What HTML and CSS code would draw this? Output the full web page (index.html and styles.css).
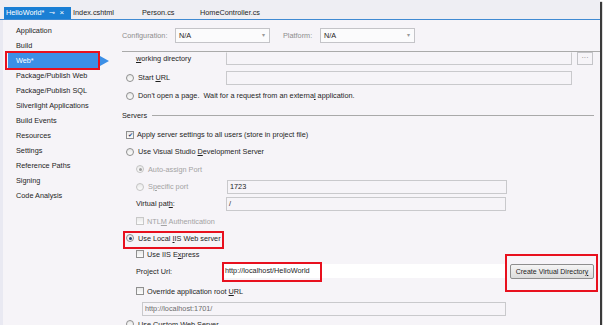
FILE: index.html
```html
<!DOCTYPE html>
<html lang="en">
<head>
    <meta charset="UTF-8">
    <title>HelloWorld - Web</title>
    <link rel="stylesheet" href="styles.css">
</head>
<body>
    <div class="window">
        <div class="tabs">
            <div class="tab active">HelloWorld* <span class="pin">&#8888;</span> <span class="close">&#215;</span></div>
            <div class="tab t-index">Index.cshtml</div>
            <div class="tab t-person">Person.cs</div>
            <div class="tab">HomeController.cs</div>
        </div>
        <div class="body">
            <ul class="nav">
                <li>Application</li>
                <li>Build</li>
                <li class="selected">Web*<span class="arrow"></span></li>
                <li>Package/Publish Web</li>
                <li>Package/Publish SQL</li>
                <li>Silverlight Applications</li>
                <li>Build Events</li>
                <li>Resources</li>
                <li>Settings</li>
                <li>Reference Paths</li>
                <li>Signing</li>
                <li>Code Analysis</li>
            </ul>
            <div class="main">
                <div class="config">
                    <span class="lbl">Configuration:</span>
                    <div class="select s-config">N/A<span class="caret">&#9662;</span></div>
                    <span class="lbl l-platform">Platform:</span>
                    <div class="select s-platform">N/A<span class="caret">&#9662;</span></div>
                </div>
                <div class="scroll">
                    <div class="pane">
                        <div class="row r-workdir">
                            <span class="label w-field"><u>w</u>orking directory</span>
                            <div class="textbox tb-long"></div>
                            <div class="dots">&middot;&middot;&middot;</div>
                        </div>
                        <div class="row r-start">
                            <span class="radio"></span><span class="label w-field2">Start <u>U</u>RL</span>
                            <div class="textbox tb-long"></div>
                        </div>
                        <div class="row r-dont">
                            <span class="radio"></span><span class="label">Don't open a page.&nbsp; Wait for a request from an externa<u>l</u> application.</span>
                        </div>
                        <div class="group">
                            <span>Servers</span>
                            <div class="rule"></div>
                        </div>
                        <div class="row r-apply">
                            <span class="check checked">&#10004;</span><span class="label">Apply server settings to all users (store in project file)</span>
                        </div>
                        <div class="row r-vs">
                            <span class="radio"></span><span class="label">Use Visual Studio <u>D</u>evelopment Server</span>
                        </div>
                        <div class="row sub r-auto disabled">
                            <span class="radio checked"></span><span class="label">Auto-assign Port</span>
                        </div>
                        <div class="row sub r-port disabled">
                            <span class="radio"></span><span class="label w-field3">S<u>p</u>ecific port</span>
                            <div class="textbox tb-mid">1723</div>
                        </div>
                        <div class="row sub r-vpath">
                            <span class="label w-field4">Virtual pat<u>h</u>:</span>
                            <div class="textbox tb-mid">/</div>
                        </div>
                        <div class="row sub r-ntlm disabled">
                            <span class="check"></span><span class="label">NTL<u>M</u> Authentication</span>
                        </div>
                        <div class="row r-iis">
                            <span class="radio checked"></span><span class="label">Use Local <u>I</u>IS Web server</span>
                        </div>
                        <div class="row sub r-express">
                            <span class="check"></span><span class="label">Use IIS E<u>x</u>press</span>
                        </div>
                        <div class="row sub r-url">
                            <span class="label w-field5">Project Url:</span>
                            <div class="textbox tb-url">http://localhost/HelloWorld</div>
                            <div class="button">Create Virtual Director<u>y</u></div>
                        </div>
                        <div class="row sub r-override">
                            <span class="check"></span><span class="label">Override application root <u>U</u>RL</span>
                        </div>
                        <div class="row sub r-root">
                            <div class="textbox tb-root">http://localhost:1701/</div>
                        </div>
                        <div class="row r-custom">
                            <span class="radio"></span><span class="label">Use Custom Web Server</span>
                        </div>
                    </div>
                </div>
            </div>
        </div>
        <div class="mark m-web"></div>
        <div class="mark m-iis"></div>
        <div class="mark m-url"></div>
        <div class="mark m-btn"></div>
    </div>
</body>
</html>
```

FILE: styles.css
```css
*{
    margin: 0;
    padding: 0;
    box-sizing: border-box;
}
body{
    background: #fff;
    font-family: "Liberation Sans", Arial, sans-serif;
    font-size: 7.3px;
    color: #1e1e1e;
}
.window{
    width: 600px;
    height: 325px;
    position: relative;
    background: #f6f4f8;
    box-shadow: 2px 2px 1px #3a3a3a;
    overflow: hidden;
}
.tabs{
    height: 20px;
    background: #eeeef3;
    border-bottom: 1px solid #3f8ad2;
    display: flex;
    align-items: flex-end;
    padding-left: 4px;
}
.tab{
    height: 12px;
    line-height: 12px;
    padding: 0 3px 0 2px;
    white-space: nowrap;
}
.tab.active{
    background: #1a7fd4;
    color: #fff;
    width: 67px;
}
.pin{
    font-size: 7px;
    margin-left: 3px;
}
.close{
    font-size: 8px;
    margin-left: 2px;
}
.t-index{
    width: 69px;
}
.t-person{
    width: 58px;
}
.body{
    display: flex;
    height: 305px;
}
.nav{
    width: 110px;
    list-style: none;
    border-left: 3px solid #e9e9f2;
    padding: 3px 0 0 5px;
}
.nav li{
    height: 15px;
    line-height: 15px;
    padding-left: 8px;
    position: relative;
}
.nav li.selected{
    background: #3c8fe6;
    color: #fff;
    width: 92px;
}
.arrow{
    position: absolute;
    right: -9px;
    top: 3px;
    border-left: 9px solid #3c8fe6;
    border-top: 5px solid transparent;
    border-bottom: 5px solid transparent;
}
.main{
    flex: 1;
    padding-left: 12px;
    display: flex;
    flex-direction: column;
}
.config{
    height: 32px;
    display: flex;
    align-items: center;
    border-bottom: 1px solid #aaa;
    padding-bottom: 1px;
}
.lbl{
    color: #8d8d8d;
    width: 53px;
}
.l-platform{
    width: 37px;
    margin-left: 13px;
}
.select{
    height: 15px;
    border: 1px solid #c4c4c8;
    background: #fbfbfc;
    line-height: 13px;
    padding-left: 3px;
    position: relative;
}
.s-config,.s-platform{
    width: 95px;
}
.caret{
    position: absolute;
    right: 4px;
    top: 0;
    color: #999;
    font-size: 6px;
}
.scroll{
    flex: 1;
    overflow: hidden;
}
.pane{
    margin-top: 0;
    padding-left: 4px;
}
.row{
    display: flex;
    align-items: center;
    height: 14px;
}
.row.sub{
    padding-left: 10px;
}
.disabled{
    color: #a3a3a3;
}
.radio{
    width: 8px;
    height: 8px;
    border-radius: 50%;
    border: 1px solid #8f8f8f;
    background: linear-gradient(#e9e9e9, #fcfcfc);
    margin-right: 4px;
    position: relative;
}
.radio.checked::after{
    content: "";
    position: absolute;
    left: 1.5px;
    top: 1.5px;
    width: 3px;
    height: 3px;
    border-radius: 50%;
    background: #1c3f70;
}
.disabled .radio{
    border-color: #c4c4c4;
}
.disabled .radio.checked::after{
    background: #a0a0a0;
}
.check{
    width: 8px;
    height: 8px;
    border: 1px solid #8f8f8f;
    background: linear-gradient(#e9e9e9, #fcfcfc);
    margin-right: 3px;
    font-size: 6px;
    line-height: 6px;
    text-align: center;
    color: #1f3f79;
}
.disabled .check{
    border-color: #c8c8c8;
}
.textbox{
    height: 14px;
    border: 1px solid #c9c9cc;
    background: #f6f4f8;
    line-height: 12px;
    padding-left: 2px;
    color: #1e1e1e;
}
.w-field{
    width: 100px;
    padding-left: 10px;
}
.w-field2{
    width: 88px;
}
.w-field3{
    width: 79px;
}
.w-field4{
    width: 90px;
}
.w-field5{
    width: 86px;
}
.tb-long{
    width: 346px;
}
.tb-mid{
    width: 280px;
}
.tb-url{
    width: 283px;
    background: #fff;
    border-color: #fff;
}
.tb-root{
    width: 364px;
    color: #6d6d6d;
    margin-left: 6px;
}
.dots{
    width: 16px;
    height: 13px;
    border: 1px solid #c4c4c8;
    margin-left: 5px;
    font-size: 7px;
    line-height: 10px;
    text-align: center;
    color: #777;
}
.r-workdir{
    height: 16px;
    align-items: flex-start;
}
.r-workdir .label{
    margin-top: 2px;
}
.r-workdir .textbox{
    height: 13px;
    border-top-color: transparent;
}
.r-start{
    height: 17px;
    margin-top: 1px;
}
.r-dont{
    height: 19px;
}
.group{
    display: flex;
    align-items: center;
    height: 21px;
    margin-left: -4px;
}
.rule{
    flex: 1;
    border-top: 1px solid #a9a9a9;
    margin: 0 6px 0 5px;
}
.r-apply{
    height: 17px;
}
.r-vs{
    height: 17px;
}
.r-auto{
    height: 18px;
}
.r-port{
    height: 17px;
}
.r-vpath{
    height: 17px;
}
.r-ntlm{
    height: 18px;
}
.r-iis{
    height: 16px;
}
.r-express{
    height: 16px;
}
.r-url{
    height: 18px;
}
.button{
    width: 84px;
    height: 15px;
    margin-left: 5px;
    border: 1px solid #8e8e8e;
    border-radius: 2px;
    background: linear-gradient(#f5f5f5, #dcdcdc);
    text-align: center;
    line-height: 13px;
    font-size: 7px;
}
.r-override{
    height: 22px;
}
.r-root{
    height: 14px;
}
.r-custom{
    height: 16px;
}
.mark{
    position: absolute;
    border: 2px solid #e8101e;
}
.m-web{
    left: 5px;
    top: 51px;
    width: 95px;
    height: 19px;
}
.m-iis{
    left: 123px;
    top: 231px;
    width: 101px;
    height: 18px;
}
.m-url{
    left: 222px;
    top: 262px;
    width: 100px;
    height: 20px;
}
.m-btn{
    left: 505px;
    top: 254px;
    width: 93px;
    height: 38px;
}
```
